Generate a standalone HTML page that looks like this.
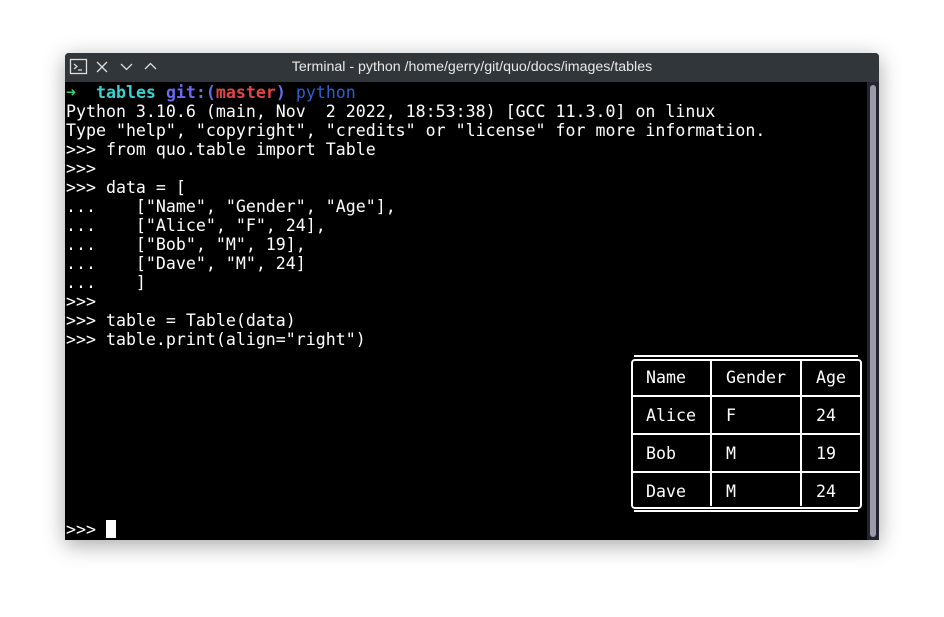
<!DOCTYPE html>
<html><head><style>
body{margin:0;width:944px;height:617px;background:#fff;position:relative;overflow:hidden;font-family:"DejaVu Sans Mono",monospace}
.win{position:absolute;left:65px;top:53px;width:814px;height:487px;background:#000;border-radius:4px 4px 0 0;box-shadow:0 5px 22px rgba(0,0,0,.35);overflow:hidden}
.tb{position:absolute;left:0;top:0;width:814px;height:29px;background:#31363b;color:#e8e8e8;font:14.2px "Liberation Sans",sans-serif}
.tb .t{position:absolute;left:0;right:0;top:6px;text-align:center}
.term{position:absolute;left:1px;top:30px;color:#fff;font-size:16.6px;line-height:19px;white-space:pre}
.sb{position:absolute;left:802px;top:29px;width:12px;height:458px;background:#232430}
.sb div{position:absolute;left:3px;top:3px;width:6px;height:452px;background:#9a9aa8;border-radius:3px}
.tbl{position:absolute;border:2px solid #fff;border-radius:4px}
.h{position:absolute;background:#fff;height:2px}
.v{position:absolute;background:#fff;width:2px}
.c{position:absolute;color:#fff;font-size:16.6px;line-height:19px;white-space:pre}
</style></head><body>
<div class="win">
<div class="tb">
<svg style="position:absolute;left:4px;top:5px" width="20" height="18"><rect x="1.5" y="1.5" width="16" height="14" fill="none" stroke="#ddd" stroke-width="1.3"/><path d="M5 6l3 2.5-3 2.5M9 12h4" stroke="#ddd" fill="none" stroke-width="1.2"/></svg>
<svg style="position:absolute;left:31px;top:8px" width="12" height="12"><path d="M1 1l10 10M11 1L1 11" stroke="#ddd" stroke-width="1.3"/></svg>
<svg style="position:absolute;left:55px;top:9px" width="13" height="10"><path d="M1 2l5.5 5.5L12 2" stroke="#ddd" fill="none" stroke-width="1.3"/></svg>
<svg style="position:absolute;left:79px;top:8px" width="13" height="10"><path d="M1 8l5.5-5.5L12 8" stroke="#ddd" fill="none" stroke-width="1.3"/></svg>
<div class="t">Terminal - python /home/gerry/git/quo/docs/images/tables</div>
</div>
<div class="term"><b style="color:#3bd16a">➜</b>  <b style="color:#39d0d0">tables</b> <b style="color:#6a6af0">git:(</b><b style="color:#e04545">master</b><b style="color:#6a6af0">)</b> <span style="color:#2a60d0">python</span>
Python 3.10.6 (main, Nov  2 2022, 18:53:38) [GCC 11.3.0] on linux
Type "help", "copyright", "credits" or "license" for more information.
&gt;&gt;&gt; from quo.table import Table
&gt;&gt;&gt;
&gt;&gt;&gt; data = [
...    ["Name", "Gender", "Age"],
...    ["Alice", "F", 24],
...    ["Bob", "M", 19],
...    ["Dave", "M", 24]
...    ]
&gt;&gt;&gt;
&gt;&gt;&gt; table = Table(data)
&gt;&gt;&gt; table.print(align="right")









&gt;&gt;&gt; </div>
<div style="position:absolute;left:41px;top:467px;width:10px;height:18px;background:#fff"></div>
<div class="sb"><div></div></div>
</div>
<div class="tbl" style="left:631px;top:359px;width:227px;height:146px"></div>
<div class="h" style="left:634px;top:355px;width:224px"></div>
<div class="h" style="left:634px;top:510px;width:224px"></div>
<div class="h" style="left:632px;top:395px;width:228px"></div>
<div class="h" style="left:632px;top:433px;width:228px"></div>
<div class="h" style="left:632px;top:471px;width:228px"></div>
<div class="v" style="left:710px;top:360px;height:146px"></div>
<div class="v" style="left:800px;top:360px;height:146px"></div>
<div class="c" style="left:646px;top:368px">Name</div>
<div class="c" style="left:726px;top:368px">Gender</div>
<div class="c" style="left:816px;top:368px">Age</div>
<div class="c" style="left:646px;top:406px">Alice</div>
<div class="c" style="left:726px;top:406px">F</div>
<div class="c" style="left:816px;top:406px">24</div>
<div class="c" style="left:646px;top:444px">Bob</div>
<div class="c" style="left:726px;top:444px">M</div>
<div class="c" style="left:816px;top:444px">19</div>
<div class="c" style="left:646px;top:482px">Dave</div>
<div class="c" style="left:726px;top:482px">M</div>
<div class="c" style="left:816px;top:482px">24</div>
</body></html>
